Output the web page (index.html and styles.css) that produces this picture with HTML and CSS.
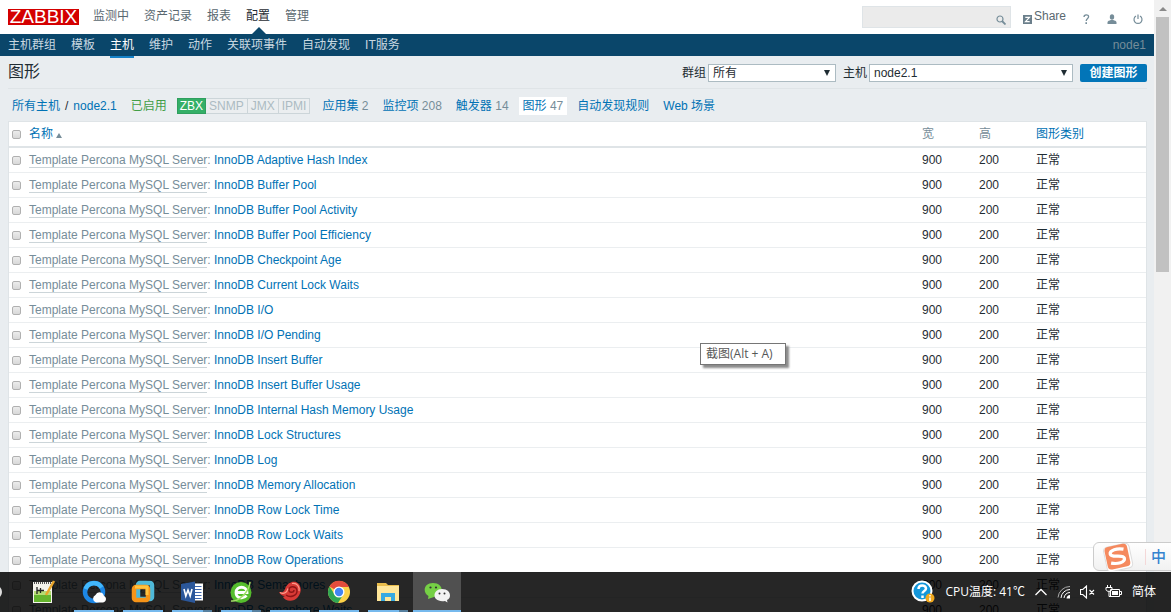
FILE: index.html
```html
<!DOCTYPE html>
<html lang="zh-CN">
<head>
<meta charset="utf-8">
<title>图形</title>
<link rel="stylesheet" href="styles.css">
</head>
<body>
<div class="window">
<div class="page">
  <header class="top">
    <a class="logo" href="#">ZABBIX</a>
    <nav class="menu"><a href="#">监测中</a><a href="#">资产记录</a><a href="#">报表</a><a href="#" class="active">配置</a><a href="#">管理</a></nav>
    <form class="search">
      <input type="text" aria-label="搜索">
      <button type="button" aria-label="搜索"><svg width="10" height="10" viewBox="0 0 10 10"><circle cx="4" cy="4" r="3" fill="none" stroke="#768d99" stroke-width="1.2"/><path d="M6 6l3.500 3.500" stroke="#768d99" stroke-width="1.800"/></svg></button>
    </form>
    <a class="share" href="#"><svg width="9" height="9" viewBox="0 0 9 9"><path fill="#6b7f8b" d="M0 0h9v9H0z"/><path d="M2.300 2.300h4.200L2.500 6.700h4.200" fill="none" stroke="#fff" stroke-width="1.200"/></svg>Share</a>
    <a class="tool" href="#" aria-label="帮助"><svg width="10" height="12" viewBox="0 0 10 12"><path d="M3 4c0-3 4.600-2.800 4.600-.3C7.600 5.400 5.200 5.500 5.200 8" fill="none" stroke="#768d99" stroke-width="1.300"/><path d="M4.400 9.200H6V11H4.400z" fill="#768d99"/></svg></a>
    <a class="tool" href="#" aria-label="用户"><svg width="10" height="12" viewBox="0 0 10 12"><ellipse cx="5" cy="4" rx="2.200" ry="2.700" fill="#768d99"/><path d="M.5 11V9.300C.5 8 2.500 7.500 3.800 7h2.400C7.500 7.500 9.500 8 9.500 9.300V11z" fill="#768d99"/></svg></a>
    <a class="tool" href="#" aria-label="退出"><svg width="10" height="12" viewBox="0 0 10 12"><path d="M3 3a4 4 0 1 0 4 0M5 1.500V6" fill="none" stroke="#768d99" stroke-width="1.200"/></svg></a>
  </header>
  <nav class="subnav"><a href="#">主机群组</a><a href="#">模板</a><a href="#" class="active">主机</a><a href="#">维护</a><a href="#">动作</a><a href="#">关联项事件</a><a href="#">自动发现</a><a href="#">IT服务</a><span class="server">node1</span></nav>
  <main>
    <div class="title">
      <h1>图形</h1>
      <form class="filters">
        <label for="group">群组</label><span class="pick"><select id="group" class="group"><option>所有</option></select></span>
        <label for="host">主机</label><span class="pick"><select id="host" class="host"><option>node2.1</option></select></span>
        <button type="button" class="create">创建图形</button>
      </form>
    </div>
    <nav class="crumbs">
      <span class="path"><a href="#">所有主机</a><span>/</span><a href="#">node2.1</a></span>
      <span class="enabled">已启用</span>
      <span class="status"><span class="on">ZBX</span><span>SNMP</span><span>JMX</span><span>IPMI</span></span>
      <span><a href="#">应用集</a> 2</span><span><a href="#">监控项</a> 208</span><span><a href="#">触发器</a> 14</span><span class="selected"><a href="#">图形</a> 47</span><span><a href="#">自动发现规则</a></span><span><a href="#">Web 场景</a></span>
    </nav>
    <table>
      <colgroup><col class="c-check"><col><col class="c-size"><col class="c-size"><col class="c-type"></colgroup>
      <thead><tr><th><input type="checkbox" aria-label="全选"></th><th><a href="#">名称<span class="sort"></span></a></th><th>宽</th><th>高</th><th><a href="#">图形类别</a></th></tr></thead>
      <tbody>
        <tr><td><input type="checkbox" aria-label="选择"></td><td><a class="tpl" href="#">Template Percona MySQL Server</a>: <a href="#">InnoDB Adaptive Hash Index</a></td><td>900</td><td>200</td><td>正常</td></tr>
        <tr><td><input type="checkbox" aria-label="选择"></td><td><a class="tpl" href="#">Template Percona MySQL Server</a>: <a href="#">InnoDB Buffer Pool</a></td><td>900</td><td>200</td><td>正常</td></tr>
        <tr><td><input type="checkbox" aria-label="选择"></td><td><a class="tpl" href="#">Template Percona MySQL Server</a>: <a href="#">InnoDB Buffer Pool Activity</a></td><td>900</td><td>200</td><td>正常</td></tr>
        <tr><td><input type="checkbox" aria-label="选择"></td><td><a class="tpl" href="#">Template Percona MySQL Server</a>: <a href="#">InnoDB Buffer Pool Efficiency</a></td><td>900</td><td>200</td><td>正常</td></tr>
        <tr><td><input type="checkbox" aria-label="选择"></td><td><a class="tpl" href="#">Template Percona MySQL Server</a>: <a href="#">InnoDB Checkpoint Age</a></td><td>900</td><td>200</td><td>正常</td></tr>
        <tr><td><input type="checkbox" aria-label="选择"></td><td><a class="tpl" href="#">Template Percona MySQL Server</a>: <a href="#">InnoDB Current Lock Waits</a></td><td>900</td><td>200</td><td>正常</td></tr>
        <tr><td><input type="checkbox" aria-label="选择"></td><td><a class="tpl" href="#">Template Percona MySQL Server</a>: <a href="#">InnoDB I/O</a></td><td>900</td><td>200</td><td>正常</td></tr>
        <tr><td><input type="checkbox" aria-label="选择"></td><td><a class="tpl" href="#">Template Percona MySQL Server</a>: <a href="#">InnoDB I/O Pending</a></td><td>900</td><td>200</td><td>正常</td></tr>
        <tr><td><input type="checkbox" aria-label="选择"></td><td><a class="tpl" href="#">Template Percona MySQL Server</a>: <a href="#">InnoDB Insert Buffer</a></td><td>900</td><td>200</td><td>正常</td></tr>
        <tr><td><input type="checkbox" aria-label="选择"></td><td><a class="tpl" href="#">Template Percona MySQL Server</a>: <a href="#">InnoDB Insert Buffer Usage</a></td><td>900</td><td>200</td><td>正常</td></tr>
        <tr><td><input type="checkbox" aria-label="选择"></td><td><a class="tpl" href="#">Template Percona MySQL Server</a>: <a href="#">InnoDB Internal Hash Memory Usage</a></td><td>900</td><td>200</td><td>正常</td></tr>
        <tr><td><input type="checkbox" aria-label="选择"></td><td><a class="tpl" href="#">Template Percona MySQL Server</a>: <a href="#">InnoDB Lock Structures</a></td><td>900</td><td>200</td><td>正常</td></tr>
        <tr><td><input type="checkbox" aria-label="选择"></td><td><a class="tpl" href="#">Template Percona MySQL Server</a>: <a href="#">InnoDB Log</a></td><td>900</td><td>200</td><td>正常</td></tr>
        <tr><td><input type="checkbox" aria-label="选择"></td><td><a class="tpl" href="#">Template Percona MySQL Server</a>: <a href="#">InnoDB Memory Allocation</a></td><td>900</td><td>200</td><td>正常</td></tr>
        <tr><td><input type="checkbox" aria-label="选择"></td><td><a class="tpl" href="#">Template Percona MySQL Server</a>: <a href="#">InnoDB Row Lock Time</a></td><td>900</td><td>200</td><td>正常</td></tr>
        <tr><td><input type="checkbox" aria-label="选择"></td><td><a class="tpl" href="#">Template Percona MySQL Server</a>: <a href="#">InnoDB Row Lock Waits</a></td><td>900</td><td>200</td><td>正常</td></tr>
        <tr><td><input type="checkbox" aria-label="选择"></td><td><a class="tpl" href="#">Template Percona MySQL Server</a>: <a href="#">InnoDB Row Operations</a></td><td>900</td><td>200</td><td>正常</td></tr>
        <tr><td><input type="checkbox" aria-label="选择"></td><td><a class="tpl" href="#">Template Percona MySQL Server</a>: <a href="#">InnoDB Semaphores</a></td><td>900</td><td>200</td><td>正常</td></tr>
        <tr><td><input type="checkbox" aria-label="选择"></td><td><a class="tpl" href="#">Template Percona MySQL Server</a>: <a href="#">InnoDB Semaphore Waits</a></td><td>900</td><td>200</td><td>正常</td></tr>
      </tbody>
    </table>
  </main>
</div>
<div class="scroll"><i class="up"></i><div class="thumb"></div></div>
</div>

<div class="tooltip">截图(Alt + A)</div>

<div class="ime">
  <svg width="36" height="30" viewBox="0 0 36 30"><g transform="rotate(-12 18 15)"><rect x="5" y="3" width="26" height="25" rx="4" fill="#fff" stroke="#ddd"/><rect x="6" y="3" width="23" height="23" rx="4" fill="#f58a5f"/><path d="M25 8.500C19 6 11 6.500 11 10.500c0 4.500 13 2.500 13 7 0 4.500-8 4.500-14 2" fill="none" stroke="#fff" stroke-width="3.200"/></g></svg>
  <span class="zh">中</span>
</div>

<div class="taskbar">
  <i class="edge"></i>
  <div class="apps">
    <button class="app idle" aria-label="Notepad++"><svg width="24" height="24" viewBox="0 0 24 24"><path fill="#f4f4ec" d="M2 2h19v21H2z"/><path fill="#b5dc74" d="M3 11h17v4H3z"/><path fill="#65b52e" d="M3 15h17v7H3z"/><path d="M3 3h17" stroke="#555" stroke-width="2" stroke-dasharray="1 1"/><path d="M6 7v7M6 10.500h7M9.500 8v5" stroke="#222" stroke-width="1.300"/><path d="M23 1l-8 14" stroke="#e9a52b" stroke-width="2.500"/></svg></button>
    <button class="app" aria-label="QQ"><svg width="24" height="24" viewBox="0 0 24 24"><circle cx="12" cy="12" r="9" fill="none" stroke="#1d87e5" stroke-width="4.500"/><path d="M3.500 9a9 9 0 0 1 16-1.500" fill="none" stroke="#42b7fb" stroke-width="4.500"/><path fill="#fff" d="M14 22.500a4 4 0 0 1-.5-7.500 4.500 4.500 0 0 1 8.500 1c3 1 2.500 6.500-1 6.500z"/></svg></button>
    <button class="app" aria-label="VMware"><svg width="24" height="24" viewBox="0 0 24 24"><rect x="7" y="3" width="14" height="16" rx="2" fill="none" stroke="#4fb9d9" stroke-width="4.500"/><rect x="3" y="7" width="14" height="13" rx="2" fill="none" stroke="#f79418" stroke-width="4.500"/><path d="M4 7h12v8" fill="none" stroke="#ffc340" stroke-width="3"/></svg></button>
    <button class="app more" aria-label="Word"><svg width="24" height="24" viewBox="0 0 24 24"><path fill="#fff" d="M12 3.500h11v17H12z"/><path d="M15 6.500h6.500m-6.500 3h6.500m-6.500 3h6.500m-6.500 3h6.500m-6.500 3h6.500" stroke="#3c65ad" stroke-width="1.200"/><path fill="#2b579a" d="M1 4l14-2.500v21.500L1 20z"/><path d="M4 9l1.800 7 2.200-6 2.200 6L12 9" fill="none" stroke="#fff" stroke-width="1.600"/></svg></button>
    <button class="app more" aria-label="浏览器"><svg width="24" height="24" viewBox="0 0 24 24"><circle cx="12" cy="12.500" r="10.500" fill="#55bd2d"/><path d="M7 12.500h11c0-7-11-7-11 0 0 6.500 8 6.500 10.500 3" fill="none" stroke="#fff" stroke-width="2.800"/><path d="M2 21C9 22 20 13 21 2" fill="none" stroke="#a2e067" stroke-width="1.500"/></svg></button>
    <button class="app" aria-label="Xshell"><svg width="24" height="24" viewBox="0 0 24 24"><path fill="#d83a36" d="M1 12c3 1 5 0 6-3C9 3 14 1 18 2c6 3 6 10 2 15-5 6-13 4-15 0l2-1c-3 0-5-2-6-4z"/><path d="M8 15c4 3 11 1 11-4 0-5-8-6-8-1 0 3 5 3 5 0" fill="none" stroke="#8e1516" stroke-width="1.400"/><path d="M2 12.500c4 2 7 0 8-4M14 3.500c5-1 8 3.500 7 7.500" fill="none" stroke="#ff9b8a" stroke-width="1.200"/></svg></button>
    <button class="app" aria-label="Chrome"><svg width="24" height="24" viewBox="0 0 24 24"><circle cx="12" cy="12" r="11" fill="#fcd248"/><path fill="#e34c3c" d="M12 12L2.500 6.500A11 11 0 0 1 22 7H12z"/><path fill="#2fa653" d="M2.500 6.500A11 11 0 0 0 11 23l5-8-8 0z"/><circle cx="12" cy="12" r="5.500" fill="#fff"/><circle cx="12" cy="12" r="4.200" fill="#4285f4"/></svg></button>
    <button class="app more" aria-label="文件资源管理器"><svg width="24" height="24" viewBox="0 0 24 24"><path fill="#e9bd4c" d="M1 3h9l2 2h11v5H1z"/><path fill="#ffe699" d="M1 6h22v15H1z"/><path fill="#36a9e1" d="M5 13h14v8h-4v-4H9v4H5z"/></svg></button>
    <button class="app current" aria-label="微信"><svg width="26" height="24" viewBox="0 0 26 24"><path fill="#75cf45" d="M9 3c11 0 12 13 1 14l-3 1-3 1 .5-3C-2 12 0 3 9 3z"/><path fill="#f2f2f2" d="M18 9c9 0 10 9 5 11l.5 2.500L21 21c-14 2-13-12-3-12z"/><g fill="#333"><circle cx="6.500" cy="7.500" r="1.100"/><circle cx="12" cy="7.500" r="1.100"/><circle cx="15.500" cy="13.500" r="1"/><circle cx="20.500" cy="13.500" r="1"/></g></svg></button>
  </div>
  <div class="tray">
    <svg width="24" height="24" viewBox="0 0 24 24"><circle cx="11" cy="11" r="9.500" fill="#1497db" stroke="#fff" stroke-width="2"/><path d="M7.500 9c0-5 7.500-4.500 7.500-.5 0 2.500-3.500 2.500-3.500 5M11.500 15.500V18" fill="none" stroke="#fff" stroke-width="2.500"/><circle cx="19" cy="18" r="4.500" fill="#f1a91e"/><path d="M19 15v1.500m0 1V21" stroke="#fff" stroke-width="1.500"/></svg>
    <span class="cpu">CPU温度: 41℃</span>
    <svg width="12" height="12" viewBox="0 0 12 12"><path d="M.5 9L6 3.500 11.500 9" fill="none" stroke="#fff" stroke-width="1.300"/></svg>
    <svg width="13" height="14" viewBox="0 0 13 14"><g fill="none" stroke="#fff"><path d="M1 12.500A12 12 0 0 1 13 1.500" stroke="#aaa"/><path d="M4 13a9 9 0 0 1 9-8.500"/><path d="M7 13a6 6 0 0 1 6-5.500"/></g><path fill="#fff" d="M9.500 13.500a4 4 0 0 1 3.500-3.500v3.500z"/></svg>
    <svg width="15" height="14" viewBox="0 0 15 14"><path d="M.5 4.500h2.300L6.500 1v12L2.800 9.500H.5zM9.500 5l4.500 4.500M14 5L9.500 9.500" fill="none" stroke="#fff" stroke-width="1.100"/></svg>
    <svg width="17" height="14" viewBox="0 0 17 14"><path d="M5.500 4.500h9v7h-9zM15 6.500h1.500v3H15M1 2.500h6v2C7 7 1 7 1 4.500zM2.500 0v2.500M5.500 0v2.500M4 6.500v5h2" fill="none" stroke="#fff"/><path fill="#fff" d="M7 6h6v4H7z"/></svg>
    <span class="lang">简体</span>
  </div>
</div>
</body>
</html>
```
FILE: styles.css
```css
* { box-sizing: border-box; }
body { margin: 0; font: 12px/16px "Liberation Sans", Arial, "Noto Sans CJK SC", sans-serif; color: #1f2c33; background: #e9edf0; overflow: hidden; }
a { color: #0072b5; text-decoration: none; }
button, input, select { font: inherit; margin: 0; }
.window { display: flex; height: 100vh; overflow: hidden; }
.page { flex: 1; min-width: 0; }

.top { display: flex; align-items: center; height: 34px; padding: 0 11px 0 8px; background: #fff; }
.logo { width: 71px; height: 16px; margin-right: 14px; background: #d40000; color: #fff; font-size: 19px; line-height: 16px; text-align: center; }
.menu { display: flex; gap: 15px; align-self: stretch; }
.menu a { position: relative; color: #5a6870; line-height: 32px; }
.menu .active { color: #1f2c33; }
.menu .active::after { content: ""; position: absolute; left: 6px; bottom: 0; border: 7px solid transparent; border-top: 0; border-bottom-color: #0a466a; }
.search { display: flex; align-items: center; width: 149px; height: 22px; margin: 0 12px 0 auto; background: #ebebeb; border: 1px solid #dfe4e7; }
.search input { flex: 1; min-width: 0; height: 20px; border: 0; background: none; outline: 0; }
.search button { display: flex; width: 16px; padding: 5px 4px 0 2px; border: 0; background: none; }
.share { display: flex; align-items: center; gap: 2px; color: #5a6870; margin-right: 15px; padding-bottom: 2px; }
.share svg { margin-top: 6px; }
.tool { display: flex; margin-left: 16px; padding-top: 3px; }
.share + .tool { margin-left: 0; }

.subnav { display: flex; gap: 15px; height: 22px; padding: 0 8px; background: #0a466a; }
.subnav a { color: #c9d8e1; line-height: 22px; height: 24px; white-space: nowrap; }
.subnav .active { position: relative; color: #fff; border-bottom: 2px solid #1582c8; }
.server { margin-left: auto; color: #768d99; line-height: 22px; }

main { padding: 0 7px 0 8px; }
.title { display: flex; align-items: center; justify-content: space-between; height: 33px; border-bottom: 1px solid #dfe4e7; }
h1 { margin: 0; font-size: 16px; font-weight: 400; }
.filters { display: flex; align-items: center; padding-top: 2px; }
.filters label { margin-right: 2px; }
.pick { position: relative; margin-right: 7px; }
.pick::after { content: ""; position: absolute; right: 6px; top: 6px; border: 3px solid transparent; border-top: 6px solid #1f2c33; border-bottom: 0; pointer-events: none; }
.pick select { display: block; appearance: none; height: 18px; padding: 0 4px; border: 1px solid #acbbc2; border-radius: 0; background: #fff; color: #1f2c33; line-height: 16px; }
.group { width: 128px; }
.host { width: 204px; }
.create { width: 67px; height: 18px; padding: 0; border: 0; border-radius: 2px; background: #0275b8; color: #fff; font-weight: 700; line-height: 18px; }

.crumbs { display: flex; align-items: center; gap: 6px; height: 32px; padding-top: 1px; color: #768d99; white-space: nowrap; }
.crumbs > span { padding: 0 4px; line-height: 18px; }
.crumbs .path { display: flex; gap: 5px; color: #1f2c33; }
.crumbs .enabled { color: #429e47; }
.crumbs .status { display: flex; padding: 0; margin-right: 2px; }
.status span { padding: 0 3px; height: 16px; border: 1px solid #ccd5d9; line-height: 15px; color: #acbbc2; background: #ebeef0; }
.status span + span { border-left-width: 0; }
.status .on { padding: 0 2px; background: #34af67; border-color: #2f9f5e; color: #fff; }
.crumbs .selected { background: #fff; }

table { width: 100%; table-layout: fixed; border-collapse: separate; border-spacing: 0; background: #fff; border: 1px solid #dfe4e7; }
.c-check { width: 14px; }
.c-size { width: 57px; }
.c-type { width: 116px; }
th, td { height: 25px; padding: 0 0 0 6px; text-align: left; font-weight: 400; line-height: 16px; border-bottom: 1px solid #ebeef0; white-space: nowrap; }
th { height: 26px; border-bottom: 2px solid #dfe4e7; color: #768d99; }
td:nth-child(2) { color: #768d99; }
th:first-child, td:first-child { padding-left: 3px; }
.tpl { color: #768d99; border-bottom: 1px solid #ccd5d9; }
.sort { display: inline-block; margin-left: 3px; border: 3px solid transparent; border-top: 0; border-bottom: 5px solid #768d99; }
input[type="checkbox"] { appearance: none; display: block; width: 9px; height: 9px; border: 1px solid #b0b0b0; border-radius: 2px; background: linear-gradient(#ececec, #d8d8d8); }

.scroll { width: 17px; background: #f1f1f1; padding: 7px 2px 0; }
.up { display: block; width: 8px; margin: 0 auto 6px 3px; border: 4px solid transparent; border-top: 0; border-bottom-color: #8a8a8a; }
.thumb { height: 255px; background: #c1c1c1; }

.tooltip { position: absolute; left: 700px; top: 343px; padding: 2px 5px; border: 1px solid #767676; background: #fff; color: #575757; box-shadow: 3px 3px 2px #8c8c8c; font-family: "Open Sans", "Noto Sans CJK SC", sans-serif; width: 86px; white-space: nowrap; }
.ime { position: absolute; right: -10px; bottom: 41px; display: flex; align-items: center; gap: 9px; height: 29px; padding: 0 14px 0 6px; border: 1px solid #ccc; border-radius: 6px; background: linear-gradient(#fff, #f1f1f1); clip-path: inset(0 10px 0 0); }
.zh { color: #3583cf; font-size: 15px; font-weight: 500; border-left: 1px solid #f4d8d8; padding-left: 5px; }

.taskbar { position: absolute; left: 0; right: 0; bottom: 0; display: flex; align-items: center; justify-content: space-between; height: 40px; padding-right: 15px; background: rgba(0, 0, 0, .85); color: #fff; }
.edge { position: absolute; left: -8px; width: 10px; height: 12px; border-radius: 50%; background: #ddd; }
.apps { display: flex; gap: 1px; align-self: stretch; padding-left: 21px; }
.app { position: relative; display: flex; align-items: center; justify-content: center; width: 48px; padding: 0; border: 0; background: none; }
.app::after { content: ""; position: absolute; left: 4px; right: 4px; bottom: 0; height: 2px; background: #76b9ed; }
.app.idle { padding-right: 4px; }
.app.idle::after { display: none; }
.app.more::after { background: linear-gradient(90deg, #76b9ed 78%, #56809f 78%); }
.app.current { background: #505050; }
.app.current::after { left: 0; right: 0; }
.tray { display: flex; align-items: center; gap: 10px; }
.cpu, .lang { font-family: "Open Sans", "Noto Sans CJK SC", sans-serif; white-space: nowrap; }
```
